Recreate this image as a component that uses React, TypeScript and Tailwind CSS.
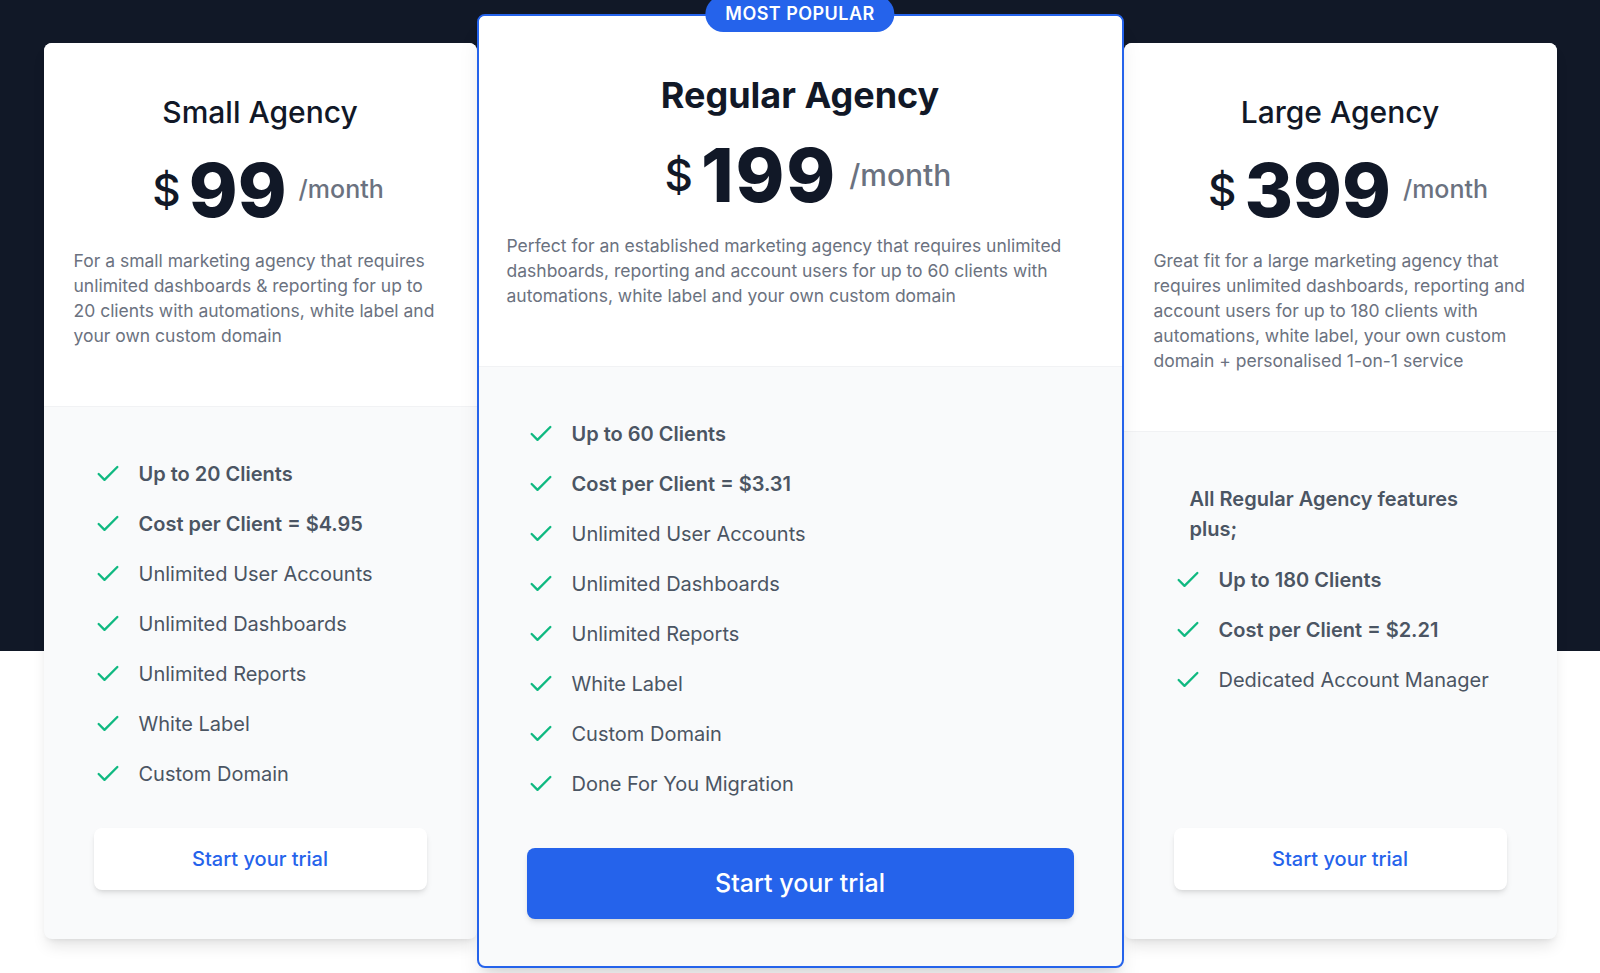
import { Check } from 'lucide-react';

type Plan = {
  title: string;
  price: string;
  desc: string[];
  intro?: string[];
  features: { text: string; bold?: boolean }[];
};

const small: Plan = {
  title: 'Small Agency',
  price: '99',
  desc: [
    'For a small marketing agency that requires',
    'unlimited dashboards & reporting for up to',
    '20 clients with automations, white label and',
    'your own custom domain',
  ],
  features: [
    { text: 'Up to 20 Clients', bold: true },
    { text: 'Cost per Client = $4.95', bold: true },
    { text: 'Unlimited User Accounts' },
    { text: 'Unlimited Dashboards' },
    { text: 'Unlimited Reports' },
    { text: 'White Label' },
    { text: 'Custom Domain' },
  ],
};

const regular: Plan = {
  title: 'Regular Agency',
  price: '199',
  desc: [
    'Perfect for an established marketing agency that requires unlimited',
    'dashboards, reporting and account users for up to 60 clients with',
    'automations, white label and your own custom domain',
  ],
  features: [
    { text: 'Up to 60 Clients', bold: true },
    { text: 'Cost per Client = $3.31', bold: true },
    { text: 'Unlimited User Accounts' },
    { text: 'Unlimited Dashboards' },
    { text: 'Unlimited Reports' },
    { text: 'White Label' },
    { text: 'Custom Domain' },
    { text: 'Done For You Migration' },
  ],
};

const large: Plan = {
  title: 'Large Agency',
  price: '399',
  desc: [
    'Great fit for a large marketing agency that',
    'requires unlimited dashboards, reporting and',
    'account users for up to 180 clients with',
    'automations, white label, your own custom',
    'domain + personalised 1-on-1 service',
  ],
  intro: ['All Regular Agency features', 'plus;'],
  features: [
    { text: 'Up to 180 Clients', bold: true },
    { text: 'Cost per Client = $2.21', bold: true },
    { text: 'Dedicated Account Manager' },
  ],
};

function Feature({ text, bold }: { text: string; bold?: boolean }) {
  return (
    <li className="flex items-center gap-[17px] leading-7">
      <Check size={28} strokeWidth={2} className="shrink-0 text-[#10b981]" />
      <span className={bold ? 'font-semibold' : ''}>{text}</span>
    </li>
  );
}

function Desc({ lines }: { lines: string[] }) {
  return (
    <p className="mt-[22px] text-[17.5px] leading-[25px] text-[#6b7280]">
      {lines.map(l => (
        <span key={l} className="block whitespace-nowrap">{l}</span>
      ))}
    </p>
  );
}

function SideCard({ plan }: { plan: Plan }) {
  return (
    <div className="my-[29px] flex flex-col overflow-hidden rounded-lg bg-[#f9fafb] shadow-lg">
      <div className="border-b border-[#f1f2f4] bg-white px-[30px] pt-[51px] pb-[58px]">
        <h3 className="text-center text-[30px] leading-9 font-medium text-[#111827]">{plan.title}</h3>
        <div className="mt-6 flex h-[72px] items-center justify-center pl-4 text-[#111827]">
          <span className="text-[44px] leading-none font-medium">$</span>
          <span className="ml-2 text-[74px] leading-none font-extrabold">{plan.price}</span>
          <span className="ml-3 text-[25px] font-medium text-[#6b7280]">/month</span>
        </div>
        <Desc lines={plan.desc} />
      </div>
      <div className="flex flex-1 flex-col px-[50px] pt-[53px] pb-[49px]">
        <ul className="space-y-[22px] text-xl text-[#4b5563]">
          {plan.intro && (
            <li className="-mt-px pl-4 leading-[30px] font-semibold">
              {plan.intro.map(l => (
                <span key={l} className="block">{l}</span>
              ))}
            </li>
          )}
          {plan.features.map(f => (
            <Feature key={f.text} {...f} />
          ))}
        </ul>
        <button className="mt-auto h-[62px] w-full rounded-lg bg-white text-xl font-medium text-[#2563eb] shadow-md">
          Start your trial
        </button>
      </div>
    </div>
  );
}

function MainCard({ plan }: { plan: Plan }) {
  return (
    <div className="relative z-10 flex flex-col rounded-lg border-2 border-[#2563eb] bg-[#f9fafb] shadow-xl">
      <span className="absolute top-[-2px] left-1/2 flex h-9 -translate-x-1/2 -translate-y-1/2 items-center rounded-full bg-[#2563eb] px-5 text-lg font-semibold tracking-wide text-white">
        MOST POPULAR
      </span>
      <div className="rounded-t-md border-b border-[#f1f2f4] bg-white px-[28px] pt-[59px] pb-[58px]">
        <h3 className="text-center text-4xl font-bold text-[#111827]">{plan.title}</h3>
        <div className="mt-6 flex h-[72px] items-center justify-center pl-4 text-[#111827]">
          <span className="text-[44px] leading-none font-medium">$</span>
          <span className="ml-2 text-[74px] leading-none font-extrabold tracking-wide">{plan.price}</span>
          <span className="ml-3 text-3xl font-medium text-[#6b7280]">/month</span>
        </div>
        <Desc lines={plan.desc} />
      </div>
      <div className="flex flex-col px-[48px] pt-[53px] pb-[47px]">
        <ul className="space-y-[22px] text-xl text-[#4b5563]">
          {plan.features.map(f => (
            <Feature key={f.text} {...f} />
          ))}
        </ul>
        <button className="mt-[50px] h-[71px] w-full rounded-lg bg-[#2563eb] text-[25px] font-medium text-white shadow-md">
          Start your trial
        </button>
      </div>
    </div>
  );
}

export default function App() {
  return (
    <div className="min-h-screen bg-[linear-gradient(to_bottom,#111827_651px,#ffffff_651px)] pt-[14px] font-['Inter',sans-serif]">
      <div className="mx-auto grid w-[1513px] grid-cols-[433px_647px_433px]">
        <SideCard plan={small} />
        <MainCard plan={regular} />
        <SideCard plan={large} />
      </div>
    </div>
  );
}
